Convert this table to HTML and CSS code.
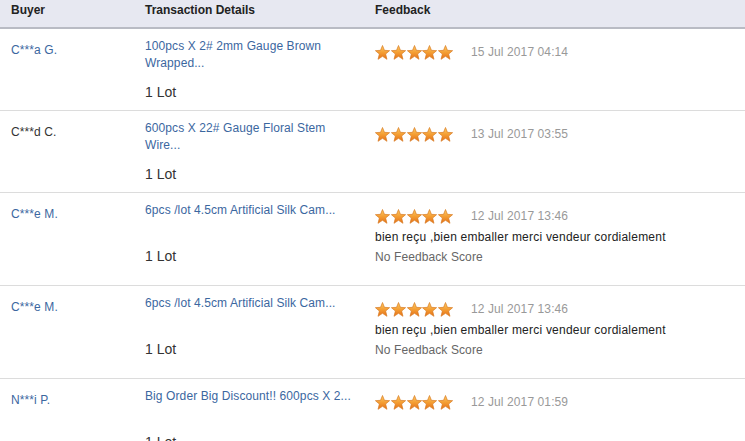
FILE: index.html
```html
<!DOCTYPE html>
<html>
<head>
<meta charset="utf-8">
<link rel="stylesheet" href="styles.css">
</head>
<body>
<svg width="0" height="0" class="defs">
  <defs>
    <linearGradient id="sg" x1="0" y1="0" x2="0" y2="1">
      <stop offset="0" stop-color="#fdcb62"/>
      <stop offset="0.55" stop-color="#f39a30"/>
      <stop offset="1" stop-color="#e4701a"/>
    </linearGradient>
    <symbol id="star" viewBox="0 0 15 15">
      <polygon points="7.5,0.5 9.44,5.33 14.6,5.65 10.64,9.02 11.97,14.3 7.5,11.3 3.03,14.3 4.36,9.02 0.4,5.65 5.56,5.33" fill="url(#sg)" stroke="#d97b24" stroke-width="0.7" stroke-linejoin="round"/>
    </symbol>
  </defs>
</svg>
<div class="table">
  <div class="head">
    <div>Buyer</div>
    <div>Transaction Details</div>
    <div>Feedback</div>
  </div>

  <div class="row">
    <div class="buyer link">C***a G.</div>
    <div class="tx">
      <div class="title">100pcs X 2# 2mm Gauge Brown Wrapped...</div>
      <div class="qty">1 Lot</div>
    </div>
    <div class="fb">
      <div class="rate"><span class="stars"><svg><use href="#star"/></svg><svg><use href="#star"/></svg><svg><use href="#star"/></svg><svg><use href="#star"/></svg><svg><use href="#star"/></svg></span><span class="date">15 Jul 2017 04:14</span></div>
    </div>
  </div>

  <div class="row">
    <div class="buyer">C***d C.</div>
    <div class="tx">
      <div class="title">600pcs X 22# Gauge Floral Stem Wire...</div>
      <div class="qty">1 Lot</div>
    </div>
    <div class="fb">
      <div class="rate"><span class="stars"><svg><use href="#star"/></svg><svg><use href="#star"/></svg><svg><use href="#star"/></svg><svg><use href="#star"/></svg><svg><use href="#star"/></svg></span><span class="date">13 Jul 2017 03:55</span></div>
    </div>
  </div>

  <div class="row">
    <div class="buyer link">C***e M.</div>
    <div class="tx">
      <div class="title">6pcs /lot 4.5cm Artificial Silk Cam...</div>
      <div class="qty">1 Lot</div>
    </div>
    <div class="fb">
      <div class="rate"><span class="stars"><svg><use href="#star"/></svg><svg><use href="#star"/></svg><svg><use href="#star"/></svg><svg><use href="#star"/></svg><svg><use href="#star"/></svg></span><span class="date">12 Jul 2017 13:46</span></div>
      <div class="comment">bien reçu ,bien emballer merci vendeur cordialement</div>
      <div class="score">No Feedback Score</div>
    </div>
  </div>

  <div class="row">
    <div class="buyer link">C***e M.</div>
    <div class="tx">
      <div class="title">6pcs /lot 4.5cm Artificial Silk Cam...</div>
      <div class="qty">1 Lot</div>
    </div>
    <div class="fb">
      <div class="rate"><span class="stars"><svg><use href="#star"/></svg><svg><use href="#star"/></svg><svg><use href="#star"/></svg><svg><use href="#star"/></svg><svg><use href="#star"/></svg></span><span class="date">12 Jul 2017 13:46</span></div>
      <div class="comment">bien reçu ,bien emballer merci vendeur cordialement</div>
      <div class="score">No Feedback Score</div>
    </div>
  </div>

  <div class="row">
    <div class="buyer link">N***i P.</div>
    <div class="tx">
      <div class="title">Big Order Big Discount!! 600pcs X 2...</div>
      <div class="qty">1 Lot</div>
    </div>
    <div class="fb">
      <div class="rate"><span class="stars"><svg><use href="#star"/></svg><svg><use href="#star"/></svg><svg><use href="#star"/></svg><svg><use href="#star"/></svg><svg><use href="#star"/></svg></span><span class="date">12 Jul 2017 01:59</span></div>
    </div>
  </div>
</div>
</body>
</html>
```

FILE: styles.css
```css
html, body {
  margin: 0;
  padding: 0;
  background: #fff;
}
body {
  font-family: "Liberation Sans", Arial, sans-serif;
  font-size: 12px;
  color: #333;
  overflow: hidden;
}
.defs {
  position: absolute;
  width: 0;
  height: 0;
}
.table {
  width: 745px;
}
.head {
  display: grid;
  grid-template-columns: 134px 230px 1fr;
  padding-left: 11px;
  height: 29px;
  box-sizing: border-box;
  padding-top: 3px;
  line-height: 14px;
  background: #e7e8f1;
  border-bottom: 2px solid #b9bbc4;
  font-weight: bold;
  color: #222;
}
.row {
  display: grid;
  grid-template-columns: 134px 230px 1fr;
  padding-left: 11px;
  border-bottom: 1px solid #dcdcdc;
  letter-spacing: 0.1px;
}
.buyer {
  padding-top: 13px;
  line-height: 17px;
  color: #333;
}
.link {
  color: #3b679f;
}
.tx {
  padding-top: 9px;
  padding-bottom: 8px;
}
.title {
  width: 212px;
  height: 34px;
  line-height: 17px;
  color: #3b679f;
}
.qty {
  margin-top: 10px;
  font-size: 14px;
  line-height: 20px;
  color: #333;
  letter-spacing: 0;
}
.fb {
  padding-top: 15px;
  padding-bottom: 18px;
}
.rate {
  display: flex;
  align-items: center;
  height: 16px;
}
.stars {
  display: flex;
  gap: 0.8px;
  width: 96px;
}
.stars svg {
  width: 15px;
  height: 15px;
  display: block;
}
.date {
  color: #999;
  line-height: 16px;
}
.comment {
  margin-top: 3px;
  line-height: 20px;
  color: #222;
  letter-spacing: 0.22px;
}
.score {
  line-height: 20px;
  color: #666;
}
```
